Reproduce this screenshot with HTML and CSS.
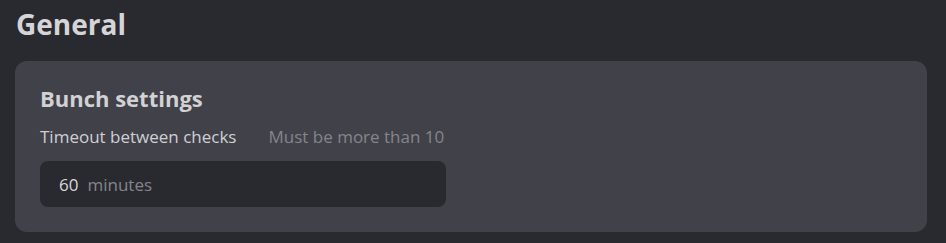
FILE: index.html
```html
<!DOCTYPE html>
<html>
<head>
<meta charset="utf-8">
<link rel="stylesheet" href="styles.css">
</head>
<body>
<main class="page">
  <h1 class="page-title">General</h1>
  <section class="card">
    <h2 class="card-title">Bunch settings</h2>
    <div class="field-head">
      <span class="field-label">Timeout between checks</span>
      <span class="field-hint">Must be more than 10</span>
    </div>
    <div class="input">
      <span class="input-value">60</span>
      <span class="input-unit">minutes</span>
    </div>
  </section>
</main>
</body>
</html>
```
FILE: styles.css
```css
html, body {
  margin: 0;
  padding: 0;
  background: #292a2f;
}
body {
  font-family: "Open Sans", Lato, sans-serif;
  color: #d2d2d4;
}
.page {
  padding: 5px 19px 0 15px;
}
.page-title {
  margin: 0 0 0 1px;
  font-size: 28px;
  line-height: 38px;
  font-weight: 700;
  color: #d5d5d7;
}
.card {
  margin-top: 18px;
  background: #41414a;
  border-radius: 12px;
  padding: 22px 25px 25px 25px;
  height: 171px;
  box-sizing: border-box;
}
.card-title {
  margin: 0;
  font-size: 22px;
  line-height: 30px;
  font-weight: 700;
  color: #d2d2d4;
}
.field-head {
  display: flex;
  gap: 32px;
  align-items: baseline;
  margin-top: 12px;
}
.field-label {
  font-size: 17px;
  line-height: 24px;
  color: #d0d0d2;
}
.field-hint {
  font-size: 17px;
  line-height: 24px;
  color: #85858b;
}
.input {
  margin-top: 12px;
  width: 406px;
  height: 46px;
  box-sizing: border-box;
  background: #292a2f;
  border-radius: 8px;
  display: flex;
  align-items: center;
  gap: 9px;
  padding-left: 19px;
}
.input-value {
  font-size: 17px;
  color: #d8d8da;
}
.input-unit {
  font-size: 17px;
  color: #85858b;
}
```
